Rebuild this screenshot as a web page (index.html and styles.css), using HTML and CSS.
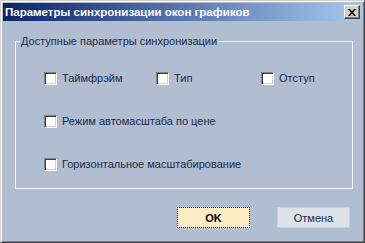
FILE: index.html
```html
<!DOCTYPE html>
<html>
  <head>
    <title>Параметры синхронизации окон графиков</title>
    <link rel="stylesheet" href="styles.css">
  </head>

  <body>
    <div class="window">
      <div class="titlebar">
        <span class="title">Параметры синхронизации окон графиков</span>
        <span class="close">
          <svg width="8" height="7" viewBox="0 0 8 7">
            <path d="M0 0h2l2 2.5 2-2.5h2l-3 3.5 3 3.5h-2l-2-2.5-2 2.5h-2l3-3.5z" fill="#000"/>
          </svg>
        </span>
      </div>

      <fieldset class="group">
        <legend>Доступные параметры синхронизации</legend>
        <div class="row three">
          <label class="check"><span class="box"></span>Таймфрэйм</label>
          <label class="check"><span class="box"></span>Тип</label>
          <label class="check"><span class="box"></span>Отступ</label>
        </div>
        <div class="row">
          <label class="check"><span class="box"></span>Режим автомасштаба по цене</label>
        </div>
        <div class="row">
          <label class="check"><span class="box"></span>Горизонтальное масштабирование</label>
        </div>
      </fieldset>

      <div class="buttons">
        <button class="btn btn_ok">OK</button>
        <button class="btn">Отмена</button>
      </div>
    </div>
  </body>
</html>
```

FILE: styles.css
```css
* {
  box-sizing: border-box;
}

body {
  margin: 0;
  font-family: "Liberation Sans", Arial, sans-serif;
  font-size: 11px;
  color: #1c2a48;
}

.window {
  width: 365px;
  height: 243px;
  padding: 2px;
  background-color: #b1bdd1;
  border: 1px solid;
  border-color: #d4d0c8 #404040 #404040 #d4d0c8;
  box-shadow: inset 1px 1px #ffffff, inset -1px -1px #808080;
}

.titlebar {
  display: flex;
  align-items: center;
  justify-content: space-between;
  height: 18px;
  padding: 0 2px 0 2px;
  background: linear-gradient(to right, #0a246a, #a6caf0);
}

.title {
  color: white;
  font-weight: bold;
  font-size: 11.5px;
  white-space: nowrap;
}

.close {
  display: flex;
  align-items: center;
  justify-content: center;
  width: 16px;
  height: 14px;
  background-color: #d4d0c8;
  border: 1px solid;
  border-color: #ffffff #404040 #404040 #ffffff;
  box-shadow: inset -1px -1px #808080;
}

.group {
  margin: 14px 9px 0 12px;
  padding: 0 0 17px 0;
  border: 1px solid #f4f6fa;
}

.group legend {
  margin-left: 4px;
  padding: 0 1px;
  line-height: 13px;
}

.row {
  display: flex;
  height: 13px;
  margin-top: 30px;
  padding-left: 28px;
}

.row:first-of-type {
  margin-top: 24px;
}

.row.three {
  display: grid;
  grid-template-columns: 112px 105px auto;
}

.check {
  display: flex;
  align-items: center;
  gap: 5px;
  line-height: 13px;
  white-space: nowrap;
}

.box {
  width: 13px;
  height: 13px;
  background-color: white;
  border: 1px solid;
  border-color: #808080 #ffffff #ffffff #808080;
  box-shadow: inset 1px 1px #404040, inset -1px -1px #d4d0c8;
}

.buttons {
  display: flex;
  justify-content: flex-end;
  gap: 27px;
  margin-top: 18px;
  padding-right: 12px;
}

.btn {
  width: 73px;
  height: 21px;
  padding: 0;
  font-family: "Liberation Sans", Arial, sans-serif;
  font-size: 11px;
  color: #1c2a48;
  background-color: #dce1ea;
  border: 1px solid #c9d0dc;
}

.btn_ok {
  font-weight: bold;
  color: #000;
  background-color: #feecc4;
  border: 1px dotted #000;
}
```
